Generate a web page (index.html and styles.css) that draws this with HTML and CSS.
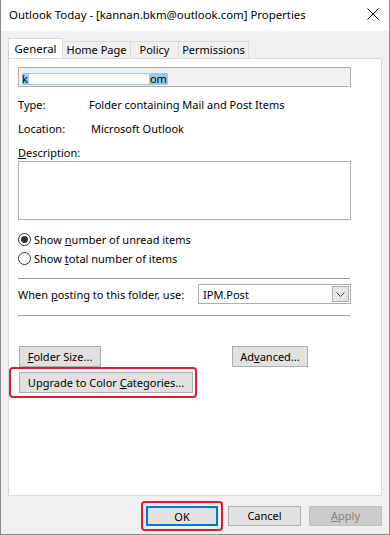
FILE: index.html
```html
<!DOCTYPE html>
<html lang="en">
<head>
    <meta charset="UTF-8">
    <meta name="viewport" content="width=device-width, initial-scale=1.0">
    <title>Outlook Today Properties</title>
    <link rel="stylesheet" href="styles.css">
</head>
<body>
    <div class="window">
        <div class="titlebar">
            <span class="title">Outlook Today - [kannan.bkm@outlook.com] Properties</span>
            <svg class="close" width="12" height="12" viewBox="0 0 12 12">
                <path d="M0.5 0.5 L11.5 11.5 M11.5 0.5 L0.5 11.5" stroke="#000" stroke-width="1" fill="none"/>
            </svg>
        </div>

        <div class="body">
            <div class="tabs">
                <div class="tab active tab-general">General</div>
                <div class="tab tab-home">Home Page</div>
                <div class="tab tab-policy">Policy</div>
                <div class="tab tab-perm">Permissions</div>
            </div>

            <div class="panel">
                <div class="name-field">
                    <span class="sel">k<span class="redact"></span>om</span>
                </div>

                <div class="info-row first">
                    <span class="info-label">Type:</span>
                    <span class="info-value">Folder containing Mail and Post Items</span>
                </div>
                <div class="info-row">
                    <span class="info-label">Location:</span>
                    <span class="info-value loc">Microsoft Outlook</span>
                </div>
                <div class="info-row">
                    <span><u>D</u>escription:</span>
                </div>
                <div class="desc-box"></div>

                <div class="radio-row">
                    <span class="radio checked"></span>
                    <span>Show <u>n</u>umber of unread items</span>
                </div>
                <div class="radio-row">
                    <span class="radio"></span>
                    <span>Show <u>t</u>otal number of items</span>
                </div>

                <div class="separator"></div>

                <div class="posting-row">
                    <span>When <u>p</u>osting to this folder, use:</span>
                    <div class="dropdown">
                        <span>IPM.Post</span>
                        <span class="drop-btn">
                            <svg width="9" height="5" viewBox="0 0 9 5">
                                <path d="M0.5 0.5 L4.5 4.5 L8.5 0.5" stroke="#444" stroke-width="1" fill="none"/>
                            </svg>
                        </span>
                    </div>
                </div>

                <div class="separator second"></div>

                <div class="button-row">
                    <button class="btn folder-size"><u>F</u>older Size...</button>
                    <button class="btn advanced">Ad<u>v</u>anced...</button>
                </div>
                <div class="highlight upgrade-wrap">
                    <button class="btn upgrade">Upgrade to Color <u>C</u>ategories...</button>
                </div>
            </div>

            <div class="footer">
                <div class="highlight ok-wrap">
                    <button class="btn ok">OK</button>
                </div>
                <button class="btn footer-btn">Cancel</button>
                <button class="btn footer-btn disabled"><u>A</u>pply</button>
            </div>
        </div>
    </div>
</body>
</html>
```

FILE: styles.css
```css
body {
    margin: 0;
    font-family: "Noto Sans", "Open Sans", sans-serif;
    font-size: 11px;
    color: #000;
    background: #fff;
    white-space: nowrap;
}
.window {
    width: 390px;
    height: 535px;
    box-sizing: border-box;
    border: 1px solid #8a8a8a;
    border-top: none;
    background: #f0f0f0;
    display: flex;
    flex-direction: column;
}
.titlebar {
    height: 31px;
    background: #fff;
    display: flex;
    align-items: center;
    justify-content: space-between;
    padding: 0 10px 0 8px;
}
.title {
    font-size: 11.4px;
    margin-top: -2px;
}
.close {
    margin-top: -4px;
}
.body {
    flex: 1;
    padding: 7px 7px 0 7px;
    display: flex;
    flex-direction: column;
}
.tabs {
    display: flex;
    align-items: flex-end;
    height: 20px;
}
.tab {
    height: 17px;
    line-height: 16px;
    text-align: center;
    border: 1px solid #d9d9d9;
    border-bottom: none;
    border-left: none;
    box-sizing: border-box;
    background: #f0f0f0;
    font-size: 11px;
}
.tab.active {
    height: 21px;
    margin-bottom: -1px;
    background: #fff;
    border-left: 1px solid #d9d9d9;
    padding-top: 2px;
    font-size: 11.4px;
}
.tab-general {
    width: 55px;
}
.tab-home {
    width: 68px;
}
.tab-policy {
    width: 48px;
}
.tab-perm {
    width: 70px;
}
.panel {
    height: 438px;
    box-sizing: border-box;
    background: #fff;
    border: 1px solid #d9d9d9;
    padding: 8px 0 0 9px;
}
.name-field {
    width: 333px;
    height: 20px;
    box-sizing: border-box;
    border: 1px solid #adadad;
    background: #f0f0f0;
    padding: 3px 0 0 3px;
}
.sel {
    display: inline-flex;
    align-items: center;
    height: 12px;
    line-height: 12px;
    background: #99c9ef;
    padding-right: 1px;
}
.redact {
    display: inline-block;
    width: 120px;
    height: 10px;
    background: #fff;
    margin: 0 1px;
}
.info-row {
    height: 24px;
    display: flex;
    align-items: center;
}
.info-row.first {
    margin-top: 5px;
}
.info-label {
    width: 71px;
}
.info-value.loc {
    margin-left: 2px;
}
.desc-box {
    width: 333px;
    height: 59px;
    box-sizing: border-box;
    border: 1px solid #adadad;
    background: #fff;
    margin-top: -3px;
    margin-bottom: 10px;
}
.radio-row {
    height: 19px;
    display: flex;
    align-items: center;
    gap: 3px;
}
.radio {
    width: 13px;
    height: 13px;
    box-sizing: border-box;
    border: 1px solid #333;
    border-radius: 50%;
    display: flex;
    align-items: center;
    justify-content: center;
}
.radio.checked::after {
    content: "";
    width: 7px;
    height: 7px;
    border-radius: 50%;
    background: #333;
}
.separator {
    width: 332px;
    height: 1px;
    background: #a0a0a0;
    margin: 10px 0 5px 0;
}
.separator.second {
    margin-top: 11px;
}
.posting-row {
    display: flex;
    align-items: center;
    justify-content: space-between;
    width: 333px;
}
.dropdown {
    width: 153px;
    height: 20px;
    box-sizing: border-box;
    border: 1px solid #adadad;
    display: flex;
    align-items: center;
    justify-content: space-between;
    padding: 0 1px 0 4px;
}
.drop-btn {
    width: 17px;
    height: 16px;
    box-sizing: border-box;
    background: #e5e5e5;
    border: 1px solid #adadad;
    display: flex;
    align-items: center;
    justify-content: center;
}
.button-row {
    display: flex;
    justify-content: space-between;
    width: 289px;
    margin-top: 30px;
    padding-left: 1px;
}
.btn {
    font-family: inherit;
    font-size: 11px;
    color: #000;
    height: 21px;
    box-sizing: border-box;
    background: #e1e1e1;
    border: 1px solid #adadad;
    padding: 0;
    margin: 0;
    line-height: 18px;
    white-space: nowrap;
}
.folder-size {
    width: 82px;
}
.advanced {
    width: 76px;
}
.highlight {
    border: 2px solid #e0183c;
    border-radius: 4px;
    display: inline-flex;
    align-items: center;
    box-sizing: border-box;
}
.upgrade-wrap {
    width: 188px;
    height: 31px;
    margin-left: -9px;
}
.upgrade {
    width: 174px;
    margin-left: 8px;
}
.footer {
    display: flex;
    justify-content: flex-end;
    align-items: center;
    gap: 8px;
    margin-top: 5px;
}
.ok-wrap {
    width: 82px;
    height: 30px;
    margin-right: -3px;
    justify-content: center;
}
.ok {
    width: 72px;
    height: 20px;
    border: 2px solid #0078d7;
}
.footer-btn {
    width: 73px;
    height: 20px;
}
.disabled {
    background: #cccccc;
    border-color: #bfbfbf;
    color: #838383;
}
```
